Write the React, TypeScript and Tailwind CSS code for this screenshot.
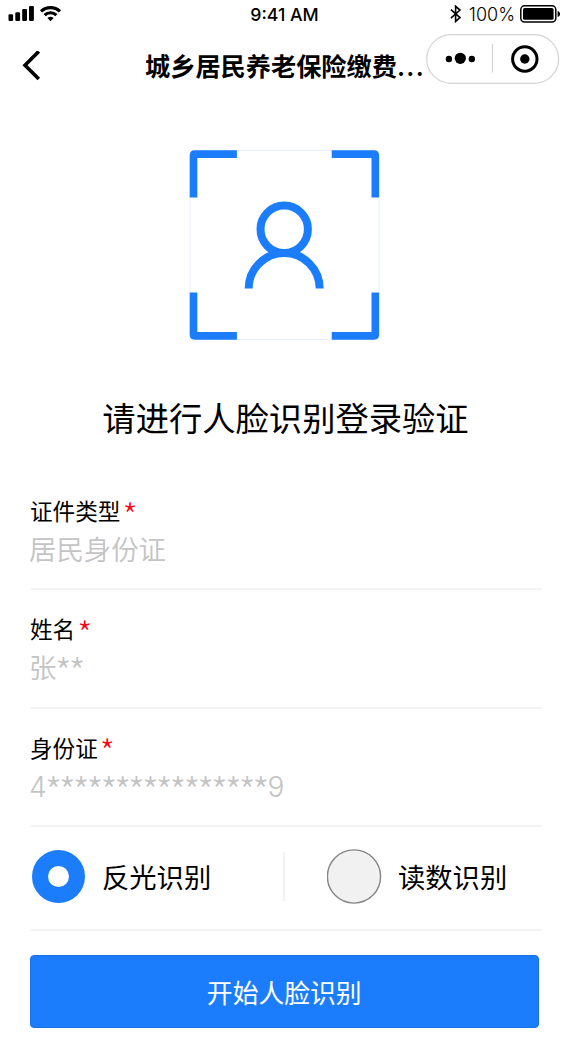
import React from "react";

const BLUE = "#1c7dfc";

function StatusBar() {
  return (
    <div className="flex h-7 items-center pl-2 pr-[7px] font-['Inter','Liberation_Sans',sans-serif]">
      <div className="flex flex-1 items-center">
        <svg width="56" height="28" viewBox="0 0 56 28">
          <rect x="0.5" y="14.3" width="4.6" height="6.7" rx="1.2" />
          <rect x="7.3" y="12.2" width="4.8" height="8.8" rx="1.2" />
          <rect x="14.2" y="9" width="4.8" height="12" rx="1.2" />
          <rect x="21" y="6" width="4.9" height="15" rx="1.2" />
          <g fill="none" stroke="#000" strokeWidth="3.1">
            <path d="M33 11.4a13.8 13.8 0 0 1 19 0" />
            <path d="M36.6 15.1a8.6 8.6 0 0 1 11.8 0" />
          </g>
          <path d="M39.4 18.1a4.5 4.5 0 0 1 6.2 0L42.5 21.3Z" />
        </svg>
      </div>
      <span className="mt-[2px] text-[17.7px] font-medium leading-7">9:41 AM</span>
      <div className="flex flex-1 items-center justify-end">
        <svg width="13" height="28" viewBox="0 0 13 28" fill="none" stroke="#000" strokeWidth="1.6">
          <path d="M0.900 9.600 10 17.600 5.600 21.400V6.300l4.400 3.800-9.100 8" />
        </svg>
        <span className="ml-[6px] mt-[2px] text-[18px] font-light leading-7">100%</span>
        <svg className="ml-[5px]" width="41" height="28" viewBox="0 0 41 28">
          <rect x="0.8" y="5.8" width="35" height="16.2" rx="3.8" fill="none" stroke="#000" strokeWidth="1.5" />
          <rect x="3" y="8" width="30.6" height="11.8" rx="1.6" />
          <path d="M37.6 11c1.6.4 2.4 1.5 2.4 3s-.8 2.600-2.400 3Z" />
        </svg>
      </div>
    </div>
  );
}

function NavBar() {
  return (
    <header className="flex h-[62px] items-center pl-[20px] pr-[9px]">
      <button className="h-10 w-[26px] shrink-0" aria-label="返回">
        <svg className="mt-[12px]" width="26" height="40" viewBox="0 0 26 40" fill="none" stroke="#000" strokeWidth="3.6">
          <path d="M18.800 0.400 5 14.200 18.800 28" />
        </svg>
      </button>
      <h1 className="ml-[99px] mt-[14px] w-[281px] shrink-0 whitespace-nowrap text-[25.2px] font-bold leading-9">
        城乡居民养老保险缴费<span className="font-['Inter',sans-serif] font-semibold tracking-[1.4px]">...</span>
      </h1>
      <svg className="shrink-0" width="134" height="50" viewBox="0 0 134 50">
        <rect x="0.700" y="0.700" width="131.900" height="48.600" rx="24.300" fill="#fff" stroke="#d4d4d4" strokeWidth="1.200" />
        <circle cx="22.900" cy="25" r="3.200" />
        <circle cx="34.300" cy="24.300" r="5.600" />
        <circle cx="45.800" cy="25" r="3.200" />
        <path d="M66.500 10v28.500" stroke="#d4d4d4" strokeWidth="1.200" />
        <circle cx="98.800" cy="25" r="12.200" fill="none" stroke="#000" strokeWidth="3" />
        <circle cx="98.800" cy="25" r="4.700" />
      </svg>
    </header>
  );
}

function FaceFrame() {
  return (
    <svg className="ml-[189px] mt-[60px] block" width="191" height="190" viewBox="-0.4 0 191 190" fill="none" stroke={BLUE}>
      <rect x="0.5" y="0.5" width="189" height="189" rx="4" strokeWidth="1" opacity="0.11" />
      <g strokeWidth="7.6">
        <path d="M47.500 4.100H5.500Q4.100 4.100 4.100 5.500V47.500" />
        <path d="M142.300 4.100h42.200q1.400 0 1.400 1.400V47.500" />
        <path d="M4.100 142.500v42q0 1.400 1.400 1.400h42" />
        <path d="M142.300 185.900h42.200q1.400 0 1.400-1.400v-42" />
        <circle cx="94.800" cy="79.300" r="23.700" strokeWidth="8" />
        <path d="M59.300 138.600a35.500 35.500 0 0 1 71 0" strokeWidth="8" />
      </g>
    </svg>
  );
}

type FieldProps = { label: string; children: React.ReactNode };

function Field({ label, children }: FieldProps) {
  return (
    <div className="ml-[31px] h-[118.4px] w-[511px] border-b-2 border-[#f3f3f3] pt-[20px]">
      <div className="-ml-px flex h-[37px] items-center text-[22.6px] leading-[37px]">
        {label}
        <span className="ml-[2px] mt-[7px] text-[34px] font-light text-[#ff0014]">*</span>
      </div>
      <div className="-ml-[2px] h-10 whitespace-nowrap text-[27.4px] font-[350] leading-[39px] text-[#c4c4c4]">{children}</div>
    </div>
  );
}

function Mask({ length }: { length: number }) {
  return (
    <span className="-ml-[1.5px] align-[-9px] text-[38px] font-light leading-none tracking-[-3px]">{"*".repeat(length)}</span>
  );
}

export default function App() {
  return (
    <main className="h-[1050px] w-[568px] overflow-hidden bg-white font-['Noto_Sans_CJK_SC',sans-serif] text-black">
      <StatusBar />
      <NavBar />
      <FaceFrame />
      <h2 className="mt-[52px] h-[50px] pl-[3px] text-center text-[33.3px] font-normal leading-[50px]">请进行人脸识别登录验证</h2>
      <section className="mt-[30px]">
        <Field label="证件类型">居民身份证</Field>
        <Field label="姓名">张<Mask length={2} /></Field>
        <Field label="身份证">
          <span className="font-['Inter',sans-serif] text-[28px] font-light">4</span>
          <Mask length={16} />
          <span className="ml-px font-['Inter',sans-serif] text-[28px] font-light">9</span>
        </Field>
      </section>
      <div className="ml-[31px] flex h-[104px] w-[511px] items-center border-b-2 border-[#f3f3f3] pb-[3px] text-[27.3px]">
        <label className="flex w-[252px] items-center">
          <span className="ml-px flex size-[53px] items-center justify-center rounded-full bg-[#1c7dfc]">
            <span className="size-[21px] rounded-full bg-white" />
          </span>
          <span className="-mt-px ml-[17px] leading-10">反光识别</span>
        </label>
        <span className="h-[49px] w-[2px] bg-[#f3f3f3]" />
        <label className="ml-[42px] flex items-center">
          <svg width="55" height="55" viewBox="0 0 55 55">
            <circle cx="27" cy="27.500" r="26.600" fill="#f1f1f1" stroke="#858585" strokeWidth="1.400" />
          </svg>
          <span className="-mt-px ml-[16px] leading-10">读数识别</span>
        </label>
      </div>
      <button className="ml-[30px] mt-[24px] block h-[72.500px] w-[508.500px] rounded-[4px] border border-[#1971e5] bg-[#1c7dfc] text-center text-[25.8px] leading-[72px] text-white">
        开始人脸识别
      </button>
    </main>
  );
}
